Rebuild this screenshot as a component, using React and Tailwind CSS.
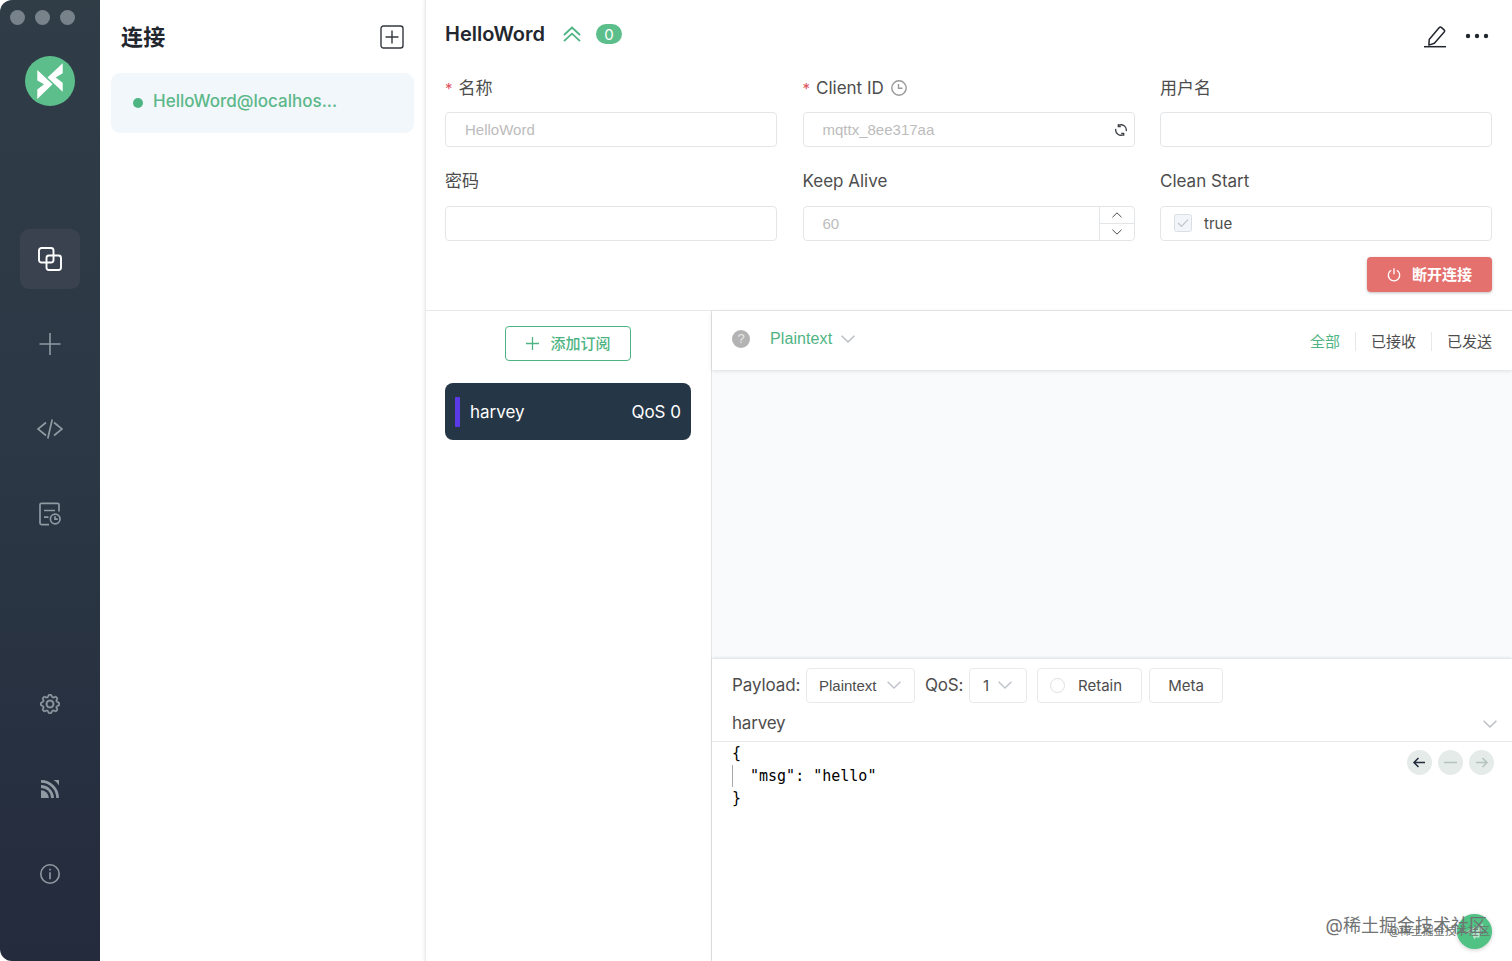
import React, { useState } from 'react';
import { BsGear } from 'react-icons/bs';

const NAV_TOP = [
  { id: 'connections', icon: <CopyIcon /> },
  { id: 'new', icon: <PlusIcon /> },
  { id: 'script', icon: <CodeIcon /> },
  { id: 'log', icon: <LogIcon /> },
];

const NAV_BOTTOM = [
  { id: 'settings', icon: <BsGear size={20} stroke="currentColor" strokeWidth={0.5} /> },
  { id: 'feed', icon: <FeedIcon /> },
  { id: 'about', icon: <InfoIcon /> },
];

const FILTERS = ['全部', '已接收', '已发送'];

const App = () => {
  const [section, setSection] = useState('connections');
  const [filter, setFilter] = useState('全部');

  return (
    <div className="flex h-[961px] w-[1512px] overflow-hidden bg-white font-['Inter','Noto_Sans_CJK_SC',sans-serif] text-[#4d4d4d]">
      <Sidebar section={section} onSelect={setSection} />
      <ConnectionList />

      <main className="relative flex w-[1087px] flex-col border-l border-[#e8ebed] shadow-[-1px_0_3px_rgba(0,0,0,0.07)]">
        <ConnectionInfo />

        <div className="flex min-h-0 flex-1">
          <Subscriptions />

          <section className="flex min-w-0 flex-1 flex-col">
            <div className="z-10 flex h-[59px] items-center justify-between bg-white pr-5 pl-5 shadow-[0_1px_4px_rgba(0,0,0,0.12)]">
              <div className="-mt-[3px] flex items-center font-['Liberation_Sans','Noto_Sans_CJK_SC',sans-serif]">
                <span className="flex h-[18px] w-[18px] items-center justify-center rounded-full bg-[#b3b3b3] text-[13px] text-[#e8e8e8]">?</span>
                <span className="ml-[20px] text-[16px] leading-none tracking-[0.100px] text-[#4fb483]">Plaintext</span>
                <Chevron className="ml-[9px] h-[8px] w-[14px] text-[#b9bcc0]" />
              </div>
              <div className="mt-[2px] flex items-center text-[15px] leading-none">
                {FILTERS.map((f, i) => (
                  <React.Fragment key={f}>
                    {i > 0 && <span className="mx-[15px] h-[19px] w-px bg-[#e8e8e8]" />}
                    <button
                      onClick={() => setFilter(f)}
                      className={filter === f ? 'text-[#4fb483]' : 'text-[#4d4d4d]'}
                    >
                      {f}
                    </button>
                  </React.Fragment>
                ))}
              </div>
            </div>

            <div className="h-[289px] bg-[#f8fafc]" />

            <Publisher />
          </section>
        </div>
      </main>
    </div>
  );
};

function Sidebar({ section, onSelect }) {
  return (
    <aside className="flex w-[100px] shrink-0 flex-col items-center rounded-l-[12px] bg-linear-to-b from-[#303d47] via-[#2b3745] to-[#242b3c]">
      {/* window controls */}
      <div className="mt-[10px] flex w-full gap-[10px] pl-[10px]">
        <i className="h-[15px] w-[15px] rounded-full bg-[#78828a]" />
        <i className="h-[15px] w-[15px] rounded-full bg-[#78828a]" />
        <i className="h-[15px] w-[15px] rounded-full bg-[#78828a]" />
      </div>

      <svg className="mt-[31px] h-[50px] w-[50px] shrink-0" viewBox="0 0 50 50">
        <circle cx="25" cy="25" r="25" fill="#5cbf8b" />
        <path d="M12.300 14 27.500 28.300 12.300 43v-9.500l6.700-5.200-6.700-3.800z" fill="#fff" />
        <path d="M37.700 7.200 22.500 21.500l15.200 14.300v-9l-7-5.300 7-4.200z" fill="#fff" />
      </svg>

      <nav className="mt-[123px] flex flex-col gap-[25px]">
        {NAV_TOP.map((n) => (
          <NavButton key={n.id} icon={n.icon} active={section === n.id} onClick={() => onSelect(n.id)} />
        ))}
      </nav>
      <nav className="mt-[130px] flex flex-col gap-[25px]">
        {NAV_BOTTOM.map((n) => (
          <NavButton key={n.id} icon={n.icon} active={section === n.id} onClick={() => onSelect(n.id)} />
        ))}
      </nav>
    </aside>
  );
}

const NavButton = ({ icon, active, onClick }) => (
  <button
    onClick={onClick}
    className={`flex h-[60px] w-[60px] items-center justify-center rounded-[9px] ${active ? 'bg-[#3a424f] text-white' : 'text-[#8f9aa3]'}`}
  >
    {icon}
  </button>
);

function ConnectionList() {
  return (
    <section className="flex w-[325px] shrink-0 flex-col pt-[25px] pr-[11px] pl-[11px]">
      <div className="flex h-[24px] items-center justify-between pr-[10px] pl-[10px]">
        <h1 className="text-[22px] leading-none font-bold tracking-[0.300px] text-[#22262e]">连接</h1>
        <svg className="h-[24px] w-[24px] text-[#33373d]" viewBox="0 0 24 24" fill="none" stroke="currentColor" strokeWidth="1.400">
          <rect x="1" y="1" width="22" height="22" rx="2.500" />
          <path d="M12 5.500v13M5.500 12h13" />
        </svg>
      </div>
      <div className="mt-[24px] flex h-[60px] items-center rounded-[9px] bg-[#f2f7fb] pb-[3px] pl-[22px]">
        <i className="mt-[2px] h-[10px] w-[10px] rounded-full bg-[#4fb483]" />
        <span className="ml-[10px] text-[17px] leading-none font-medium text-[#5cb88a]">HelloWord@localhos...</span>
      </div>
    </section>
  );
}

function ConnectionInfo() {
  return (
    <header className="h-[311px] shrink-0 border-b border-[#e6e8ea] pr-5 pl-[19px]">
      <div className="flex h-[68px] items-center justify-between">
        <div className="flex items-center">
          <h2 className="text-[20px] leading-none font-semibold text-[#22262e]">HelloWord</h2>
          <svg className="ml-[18px] h-[16px] w-[18px] text-[#4fb483]" viewBox="0 0 18 16" fill="none" stroke="currentColor" strokeWidth="1.800">
            <path d="m1 9 8-7.500L17 9M1 15.200l8-7.500 8 7.500" />
          </svg>
          <span className="ml-[15px] flex h-[20px] w-[26px] items-center justify-center rounded-full bg-[#5cbf8b] text-[15px] leading-none text-white">0</span>
        </div>
        <div className="mt-[4px] flex items-center text-[#22262e]">
          <svg className="mt-[2px] h-[24px] w-[22px]" viewBox="0 0 22 24" fill="none" stroke="currentColor" strokeWidth="1.500" strokeLinejoin="round">
            <path d="M5.200 14.600 15.300 2.600q1-1 2-.2l2.800 2.500q1 .9.100 2L10.400 18.200l-5.500 1.900z" />
            <path d="M0 21.700h22" strokeWidth="1.500" />
          </svg>
          <svg className="mr-[3px] ml-[19px] h-[6px] w-[24px]" viewBox="0 0 24 6" fill="currentColor">
            <circle cx="3" cy="3" r="2.200" />
            <circle cx="12" cy="3" r="2.200" />
            <circle cx="21" cy="3" r="2.200" />
          </svg>
        </div>
      </div>

      <div className="grid grid-cols-3 gap-x-[25.500px]">
        <Field label="名称" required>
          <span className="pl-[19px]">HelloWord</span>
        </Field>
        <Field
          label="Client ID"
          required
          extra={
            <svg className="-mt-px ml-[7px] h-[16px] w-[16px] text-[#999]" viewBox="0 0 16 16" fill="none" stroke="currentColor" strokeWidth="1.400">
              <circle cx="8" cy="8" r="7.200" />
              <path d="M7.500 4v4.300h4" />
            </svg>
          }
        >
          <span className="flex-1 pl-[19px]">mqttx_8ee317aa</span>
          <svg className="mr-[7px] h-[12px] w-[12px] text-[#3d4045]" viewBox="0 0 12 12" fill="none" stroke="currentColor" strokeWidth="1.300">
            <path d="M3.400 1.500A5.300 5.300 0 0 1 11.200 7.200M.8 4.800A5.300 5.300 0 0 0 8.600 10.500M3.300 .2v2.500h2.500M8.700 11.800v-2.500H6.200" />
          </svg>
        </Field>
        <Field label="用户名" />
        <Field label="密码" />
        <Field label="Keep Alive">
          <span className="flex-1 pl-[19px]">60</span>
          <span className="flex h-full w-[35px] flex-col border-l border-[#e3e6e9] text-[#4d4d4d]">
            <i className="flex flex-1 items-center justify-center border-b border-[#e3e6e9]">
              <Chevron className="h-[6px] w-[10px] rotate-180" />
            </i>
            <i className="flex flex-1 items-center justify-center">
              <Chevron className="h-[6px] w-[10px]" />
            </i>
          </span>
        </Field>
        <Field label="Clean Start">
          <svg className="ml-[13px] h-[18px] w-[18px]" viewBox="0 0 18 18" fill="none">
            <rect x=".5" y=".5" width="17" height="17" rx="2" fill="#f2f6fb" stroke="#dadee5" />
            <path d="m4 9 3.500 3.500L14 5.700" stroke="#c0c4cc" strokeWidth="1.200" />
          </svg>
          <span className="ml-[12px] font-['Inter',sans-serif] text-[15px] text-[#4d4d4d]">true</span>
        </Field>
      </div>

      <div className="mt-[2px] flex justify-end">
        <button className="flex h-[35px] w-[125px] items-center justify-center rounded-[4px] bg-[#e4716e] text-[15px] leading-none font-bold text-white shadow-[0_1px_3px_rgba(0,0,0,0.25)]">
          <svg className="mr-[11px] h-[14px] w-[14px]" viewBox="0 0 14 14" fill="none" stroke="currentColor" strokeWidth="1.300">
            <path d="M4.200 2.200a5.700 5.700 0 1 0 5.600 0M7 .3v6" />
          </svg>
          断开连接
        </button>
      </div>
    </header>
  );
}

const Field = ({ label, required, extra, children }) => (
  <div className="h-[93.500px]">
    <div className="flex h-[44px] items-center pb-[4px] text-[17px] leading-none">
      {required && <span className="mr-[6px] text-[15px] text-[#e0525c]">*</span>}
      {label}
      {extra}
    </div>
    <div className="flex h-[35px] items-center rounded-[4px] border border-[#e3e6e9] font-['Liberation_Sans',sans-serif] text-[15px] leading-none text-[#bcbcbc]">
      {children}
    </div>
  </div>
);

function Subscriptions() {
  return (
    <section className="w-[286px] shrink-0 border-r border-[#e3e6e9] pt-[15px] pr-5 pl-[19px]">
      <button className="mx-auto flex h-[35px] w-[126px] items-center justify-center rounded-[4px] border border-[#4fb483] pb-px pl-px text-[15px] leading-none font-medium text-[#4fb483]">
        <svg className="mr-[11px] h-[13px] w-[13px]" viewBox="0 0 13 13" stroke="currentColor" strokeWidth="1.300">
          <path d="M6.500 0v13M0 6.500h13" />
        </svg>
        添加订阅
      </button>
      <div className="mt-[22px] flex h-[57px] items-center rounded-[8px] bg-[#253646] px-[10px] text-[17px] leading-none text-white">
        <i className="h-[30px] w-[5px] rounded-[1px] bg-[#5a3ae6]" />
        <span className="mt-px ml-[10px] flex-1">harvey</span>
        <span className="mt-px">QoS 0</span>
      </div>
    </section>
  );
}

function Publisher() {
  return (
    <div className="relative flex flex-1 flex-col bg-white shadow-[0_-1px_3px_rgba(0,0,0,0.12)]">
      <div className="flex h-[52px] items-center pl-5 text-[17px] leading-none">
        <span className="w-[74px] tracking-[-0.100px]">Payload:</span>
        <div className="flex h-[35px] w-[109px] items-center rounded-[4px] border border-[#e8eaed] pl-[12px] font-['Liberation_Sans',sans-serif] text-[15px]">
          <span className="w-[68px]">Plaintext</span>
          <Chevron className="h-[8px] w-[14px] text-[#bfc3c9]" />
        </div>
        <span className="ml-[10px] w-[44px] tracking-[-0.200px]">QoS:</span>
        <div className="flex h-[35px] w-[58px] items-center rounded-[4px] border border-[#e8eaed] pl-[13px] text-[15px]">
          <span className="w-[15px]">1</span>
          <Chevron className="h-[8px] w-[14px] text-[#bfc3c9]" />
        </div>
        <div className="ml-[10px] flex h-[35px] w-[105px] items-center rounded-[4px] border border-[#e8eaed] pl-[12px] text-[15px]">
          <i className="mr-[13px] h-[15px] w-[15px] rounded-full border border-[#dddfe3]" />
          Retain
        </div>
        <button className="ml-[7px] flex h-[35px] w-[74px] items-center justify-center rounded-[4px] border border-[#e8eaed] text-[15px]">Meta</button>
      </div>

      <div className="flex h-[31px] items-center justify-between border-b border-[#e6e8ea] pr-[15px] pb-[6px] pl-5 text-[17px] leading-none">
        <span className="tracking-[-0.200px]">harvey</span>
        <Chevron className="mt-[2px] h-[8px] w-[14px] text-[#b9bcc0]" />
      </div>

      <div className="flex justify-between pr-[18px] pl-5">
        <pre className="font-['DejaVu_Sans_Mono',monospace] text-[15px] leading-[22.500px] text-black">
          <div>{'{'}</div>
          <div className="border-l border-[#a8a8a8] pl-[17px]">"msg": "hello"</div>
          <div>{'}'}</div>
        </pre>
        <div className="mt-[8px] flex h-[25px] gap-[6px]">
          <RoundButton className="text-[#222b3c]" d="M18 12.500H7.500M11.500 8l-4.500 4.500 4.500 4.500" strokeWidth={1.500} />
          <RoundButton className="text-[#b5c3bf]" d="M6 12.500h13" strokeWidth={1.500} />
          <RoundButton className="text-[#b5c3bf]" d="M7 12.500h10.500M13.500 8l4.500 4.500-4.500 4.500" strokeWidth={1.500} />
        </div>
      </div>

      {/* send button and the watermarks over it */}
      <button className="absolute right-[20px] bottom-[12px] flex h-[35px] w-[35px] items-center justify-center rounded-full bg-[#4fc284] shadow-[0_1px_4px_rgba(0,0,0,0.2)]">
        <svg className="h-[17px] w-[18px]" viewBox="0 0 18 17" fill="#b5e5cc">
          <path d="M17 0 0 8.500l5 2zM17.500.5 6.500 11v1.500l2 4 1.500-2.500 3 1z" />
        </svg>
      </button>
      <span className="absolute right-[25px] bottom-[25px] text-[18px] leading-[20px] whitespace-nowrap text-[#707373]">@稀土掘金技术社区</span>
      <span className="absolute right-[22px] bottom-[24px] text-[11.300px] leading-[12px] whitespace-nowrap text-[#6d7270]">@稀土掘金技术社区</span>
    </div>
  );
}

const RoundButton = ({ className, d, strokeWidth }) => (
  <button className={`h-[25px] w-[25px] rounded-full bg-[#e4ebe9] ${className}`}>
    <svg viewBox="0 0 25 25" fill="none" stroke="currentColor" strokeWidth={strokeWidth}>
      <path d={d} />
    </svg>
  </button>
);

function Chevron({ className }) {
  return (
    <svg className={className} viewBox="0 0 14 8" fill="none" stroke="currentColor" strokeWidth="1.400">
      <path d="m.6.8 6.400 6.200L13.400.8" />
    </svg>
  );
}

function CopyIcon() {
  return (
    <svg width="24" height="24" viewBox="0 0 24 24" fill="none" stroke="currentColor" strokeWidth="1.900">
      <rect x="1" y="1" width="14.500" height="14.500" rx="2.500" />
      <rect x="8.500" y="8.500" width="14.500" height="14.500" rx="2.500" />
    </svg>
  );
}

function PlusIcon() {
  return (
    <svg width="22" height="22" viewBox="0 0 22 22" fill="none" stroke="currentColor" strokeWidth="1.600">
      <path d="M11 0v22M.5 11h21" />
    </svg>
  );
}

function CodeIcon() {
  return (
    <svg width="26" height="20" viewBox="0 0 26 20" fill="none" stroke="currentColor" strokeWidth="1.700">
      <path d="M9 3.500.9 10 9 16.500M17 3.500l8.100 6.500-8.100 6.500M15.200.5 10.800 19.500" />
    </svg>
  );
}

function LogIcon() {
  return (
    <svg width="22" height="24" viewBox="0 0 22 24" fill="none" stroke="currentColor" strokeWidth="1.700">
      <path d="M20 9.500V2.800q0-1.500-1.500-1.500h-16Q1 1.300 1 2.800v18.300q0 1.500 1.500 1.500H10M5 8.500h11M5 15.200h4.500" />
      <circle cx="16.200" cy="17" r="4.800" />
      <path d="M16 14.200v3h2.800" />
    </svg>
  );
}

function FeedIcon() {
  return (
    <svg width="18" height="18" viewBox="0 0 18 18" fill="none" stroke="currentColor">
      <path d="M0 10.200A7.800 7.800 0 0 1 7.800 18H0z" fill="currentColor" stroke="none" />
      <circle cx="0" cy="18" r="11.500" strokeWidth="2.800" />
      <circle cx="0" cy="18" r="16.600" strokeWidth="2.800" />
      <path d="M12.500 0H18v5.500Q16.200 2 12.500 0" fill="currentColor" stroke="none" />
    </svg>
  );
}

function InfoIcon() {
  return (
    <svg width="20" height="20" viewBox="0 0 20 20" fill="none" stroke="currentColor">
      <circle cx="10" cy="10" r="9.200" strokeWidth="1.600" />
      <path d="M10 8.300v7M10 4.800v1.800" strokeWidth="1.600" />
    </svg>
  );
}

export default App;
